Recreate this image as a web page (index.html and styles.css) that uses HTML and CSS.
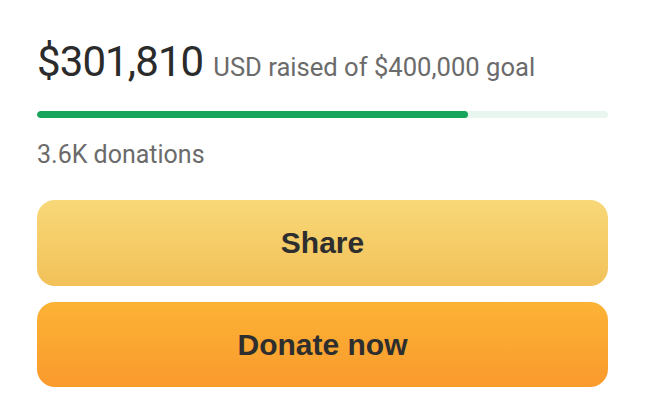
FILE: index.html
```html
<!DOCTYPE html>
<html lang="en">
<head>
    <meta charset="UTF-8">
    <meta name="viewport" content="width=device-width, initial-scale=1.0">
    <title>Donate</title>
    <link rel="stylesheet" href="styles.css">
</head>
<body>
    <div class="donate-card">
        <div class="raised">
            <span class="amount">$301,810</span>
            <span class="goal">USD raised of $400,000 goal</span>
        </div>

        <!-- Progress bar -->
        <div class="progress">
            <div class="progress-fill" style="width: 75.5%"></div>
        </div>

        <div class="donations">3.6K donations</div>

        <div class="actions">
            <button class="btn share-btn">Share</button>
            <button class="btn donate-btn">Donate now</button>
        </div>
    </div>
</body>
</html>
```

FILE: styles.css
```css
* {
    margin: 0;
    padding: 0;
    box-sizing: border-box;
}

body {
    font-family: Roboto, "Liberation Sans", sans-serif;
    background-color: #fff;
    color: #333;
}

.donate-card {
    width: 648px;
    padding: 38px 40px 0 37px;
}

.raised {
    display: flex;
    align-items: baseline;
    gap: 10px;
    line-height: 48px;
}

.amount {
    font-size: 42px;
    color: #2b2b2b;
    letter-spacing: -0.9px;
}

.goal {
    font-size: 25.6px;
    color: #6b6b6b;
}

.progress {
    margin-top: 20px;
    height: 7px;
    border-radius: 4px;
    background-color: #e9f5ef;
    overflow: hidden;
}

.progress-fill {
    height: 100%;
    background-color: #18a55b;
    border-radius: 4px;
}

.donations {
    margin-top: 22px;
    font-size: 25px;
    color: #6b6b6b;
    line-height: 30px;
}

.actions {
    display: flex;
    flex-direction: column;
    gap: 16px;
    margin-top: 30px;
}

.btn {
    height: 86px;
    border: none;
    border-radius: 18px;
    font-family: "Liberation Sans", Arial, sans-serif;
    font-weight: bold;
    font-size: 30px;
    color: #2e2e2e;
    cursor: pointer;
}

.share-btn {
    background: linear-gradient(#f8d878, #f2c158);
}

.donate-btn {
    height: 85px;
    background: linear-gradient(#fcb335, #f99a2d);
}
```
